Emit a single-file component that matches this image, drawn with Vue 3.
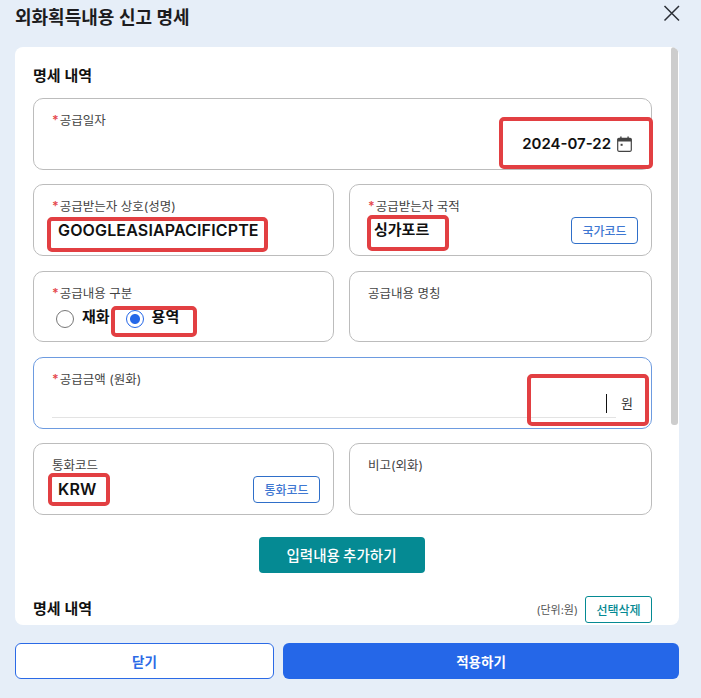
<script setup>
</script>

<template>
  <div class="popup">
    <header class="popup-head">
      <h2 class="popup-title">외화획득내용 신고 명세</h2>
      <button type="button" class="close-btn" aria-label="닫기">
        <svg width="18" height="18" viewBox="0 0 18 18" fill="none">
          <path d="M1.5 2L16 16.5M16 2L1.5 16.5" stroke="#2b2f36" stroke-width="1.5" />
        </svg>
      </button>
    </header>

    <section class="card">
      <div class="scrollbar" aria-hidden="true" />
      <div class="card-inner">
        <h3 class="sec-title">명세 내역</h3>

        <div class="field">
          <span class="label"><i class="req">*</i>공급일자</span>
          <div class="date-row">
            <span class="value">2024-07-22</span>
            <svg class="cal" width="15" height="16" viewBox="0 0 15 16" fill="none">
              <rect x="0.7" y="2.4" width="13.6" height="12.9" rx="1.2" stroke="#444" stroke-width="1.2" />
              <path d="M0.7 5.4H14.3V3.2a.8.8 0 0 0-.8-.8H1.5a.8.8 0 0 0-.8.8z" fill="#444" />
              <path d="M3.9 0.4V3M11.1 0.4V3" stroke="#444" stroke-width="1.4" />
              <rect x="3.6" y="7.8" width="2" height="2" fill="#444" />
            </svg>
          </div>
          <span class="mark mark-date" />
        </div>

        <div class="row">
          <div class="field">
            <span class="label"><i class="req">*</i>공급받는자 상호(성명)</span>
            <span class="value latin">GOOGLEASIAPACIFICPTE</span>
            <span class="mark mark-name" />
          </div>
          <div class="field">
            <span class="label"><i class="req">*</i>공급받는자 국적</span>
            <span class="value">싱가포르</span>
            <button type="button" class="code-btn">국가코드</button>
            <span class="mark mark-nation" />
          </div>
        </div>

        <div class="row">
          <div class="field">
            <span class="label"><i class="req">*</i>공급내용 구분</span>
            <div class="radios">
              <label class="radio"><span class="dot" />재화</label>
              <label class="radio"><span class="dot on" />용역</label>
            </div>
            <span class="mark mark-radio" />
          </div>
          <div class="field">
            <span class="label">공급내용 명칭</span>
          </div>
        </div>

        <div class="field focused">
          <span class="label"><i class="req">*</i>공급금액 (원화)</span>
          <div class="amount-row">
            <span class="amount-input"><span class="caret" /></span>
            <span class="unit">원</span>
          </div>
          <span class="mark mark-amount" />
        </div>

        <div class="row">
          <div class="field">
            <span class="label">통화코드</span>
            <span class="value latin">KRW</span>
            <button type="button" class="code-btn">통화코드</button>
            <span class="mark mark-krw" />
          </div>
          <div class="field">
            <span class="label">비고(외화)</span>
          </div>
        </div>

        <div class="add-wrap">
          <button type="button" class="add-btn">입력내용 추가하기</button>
        </div>

        <div class="list-head">
          <h3 class="sec-title">명세 내역</h3>
          <div class="list-tools">
            <span class="unit-note">(단위:원)</span>
            <button type="button" class="del-btn">선택삭제</button>
          </div>
        </div>
      </div>
    </section>

    <footer class="actions">
      <button type="button" class="btn btn-ghost">닫기</button>
      <button type="button" class="btn btn-primary">적용하기</button>
    </footer>
  </div>
</template>

<style scoped>
.popup {
  width: 701px;
  height: 698px;
  box-sizing: border-box;
  padding: 0 22px 0 15px;
  background: #e6eef8;
  font-family: Inter, "Noto Sans CJK KR", sans-serif;
  color: #111;
  overflow: hidden;
}

.popup-head {
  height: 47px;
  display: flex;
  justify-content: space-between;
  align-items: flex-start;
}

.popup-title {
  margin: 7px 0 0;
  font-size: 18px;
  line-height: 22px;
  font-weight: 600;
  color: #1c1c1e;
}

.close-btn {
  margin: 4px -2px 0 0;
  padding: 0;
  border: none;
  background: none;
  width: 18px;
  height: 18px;
}

.card {
  position: relative;
  height: 578px;
  background: #fff;
  border-radius: 8px;
  overflow: hidden;
}

.scrollbar {
  position: absolute;
  top: 0;
  right: 1px;
  width: 7px;
  height: 378px;
  background: #cdcdcd;
  border-radius: 3px;
}

.card-inner {
  padding: 20px 27px 0 18px;
  display: flex;
  flex-direction: column;
  gap: 14.5px;
}

.sec-title {
  margin: 0;
  font-size: 15px;
  line-height: 18px;
  font-weight: 600;
  color: #111;
}

.card-inner > .sec-title {
  margin-bottom: -1.5px;
}

.row {
  display: grid;
  grid-template-columns: 301px 303px;
  gap: 15px;
}

.field {
  position: relative;
  height: 71.75px;
  box-sizing: border-box;
  padding: 14px 18px 0;
  border: 1px solid #bcbcbc;
  border-radius: 10px;
  display: flex;
  flex-direction: column;
  align-items: flex-start;
}

.focused {
  border-color: #6d9be0;
}

.label {
  font-size: 12.5px;
  line-height: 16px;
  color: #444;
}

.req {
  font-style: normal;
  font-weight: 600;
  color: #e5484d;
  margin-right: 1px;
}

.value {
  margin: 5px 0 0 6px;
  font-size: 15px;
  line-height: 20px;
  font-weight: 600;
  color: #111;
}

.latin {
  font-size: 16px;
  letter-spacing: 0.15px;
}

.date-row {
  align-self: flex-end;
  margin: 5px 1px 0 0;
  display: flex;
  align-items: center;
  gap: 6px;
}

.date-row .value {
  margin: 0;
}

.cal {
  display: block;
}

.code-btn {
  position: absolute;
  right: 13px;
  bottom: 11px;
  width: 67px;
  height: 27px;
  padding: 0;
  border: 1px solid #2f6fc9;
  border-radius: 4px;
  background: #fff;
  font: 500 12px "Noto Sans CJK KR", sans-serif;
  color: #3f78d2;
}

.radios {
  display: flex;
  align-items: center;
  gap: 16px;
  margin: 3.5px 0 0 4px;
}

.radio {
  display: flex;
  align-items: center;
  gap: 8px;
  font-size: 15px;
  line-height: 20px;
  font-weight: 600;
}

.dot {
  width: 18px;
  height: 18px;
  margin-top: 5px;
  box-sizing: border-box;
  border: 1px solid #777;
  border-radius: 50%;
}

.dot.on {
  border-color: #2567e8;
  background: radial-gradient(circle, #2567e8 0 4.5px, #fff 5.5px);
}

.amount-row {
  align-self: stretch;
  margin-top: 2px;
  display: flex;
  align-items: flex-end;
}

.amount-input {
  flex: 1;
  height: 27px;
  border-bottom: 1px solid #e3e3e3;
  display: flex;
  justify-content: flex-end;
  padding-right: 9px;
}

.caret {
  width: 1px;
  height: 19px;
  margin-top: 4px;
  background: #111;
}

.unit {
  width: 22px;
  margin: 0 -5px 6px 0;
  text-align: center;
  font-size: 13px;
  line-height: 18px;
  color: #333;
}

.mark {
  position: absolute;
  box-sizing: border-box;
  border: 4px solid #e23f42;
  border-radius: 5px;
  pointer-events: none;
}

.mark-date {
  right: -2px;
  top: 18px;
  width: 154px;
  height: 52px;
}

.mark-name {
  left: 13px;
  top: 32px;
  width: 221px;
  height: 35px;
}

.mark-nation {
  left: 17px;
  top: 30px;
  width: 82px;
  height: 36px;
}

.mark-radio {
  left: 77px;
  top: 34px;
  width: 86px;
  height: 31px;
}

.mark-amount {
  right: 2px;
  top: 16px;
  width: 122px;
  height: 52px;
}

.mark-krw {
  left: 14px;
  top: 29px;
  width: 62px;
  height: 33px;
}

.add-wrap {
  display: flex;
  justify-content: center;
  margin: 7.5px 0 8.5px;
  padding-right: 2px;
}

.add-btn {
  width: 166px;
  height: 36px;
  padding: 0;
  border: none;
  border-radius: 4px;
  background: #058a93;
  color: #fff;
  font: 500 14.5px "Noto Sans CJK KR", sans-serif;
}

.list-head {
  display: flex;
  justify-content: space-between;
  align-items: center;
}

.list-tools {
  display: flex;
  align-items: center;
  gap: 7px;
}

.unit-note {
  font-size: 11px;
  color: #555;
}

.del-btn {
  width: 67px;
  height: 27px;
  padding: 0;
  border: 1px solid #058a93;
  border-radius: 3px;
  background: #fff;
  color: #058a93;
  font: 500 12px "Noto Sans CJK KR", sans-serif;
}

.actions {
  display: grid;
  grid-template-columns: 259px 396px;
  gap: 9px;
  margin-top: 18px;
}

.btn {
  height: 36px;
  padding: 0;
  border-radius: 6px;
  font: 600 13.5px "Noto Sans CJK KR", sans-serif;
}

.btn-ghost {
  background: #fff;
  border: 1px solid #2b6ae6;
  color: #2b6ae6;
}

.btn-primary {
  background: #2567e8;
  border: none;
  color: #fff;
}
</style>
